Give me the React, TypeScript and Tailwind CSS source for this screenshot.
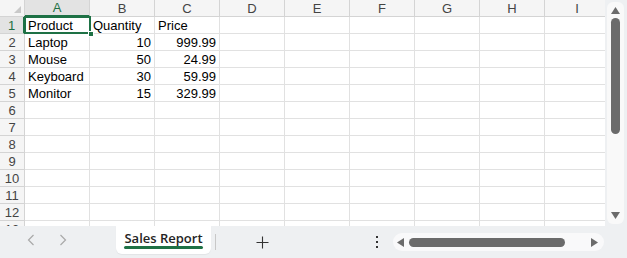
import React from 'react';

const cols = ['A', 'B', 'C', 'D', 'E', 'F', 'G', 'H', 'I'];

const data: Record<number, (string | null)[]> = {
  1: ['Product', 'Quantity', 'Price'],
  2: ['Laptop', '10', '999.99'],
  3: ['Mouse', '50', '24.99'],
  4: ['Keyboard', '30', '59.99'],
  5: ['Monitor', '15', '329.99'],
};

const rows = Array.from({ length: 13 }, (_, i) => i + 1);

export default function App() {
  return (
    <div className="w-[627px] h-[258px] flex flex-col bg-white overflow-hidden" style={{ fontFamily: '"Liberation Sans", Arial, sans-serif' }}>
      {/* Grid + vertical scrollbar */}
      <div className="flex h-[226px]">
        <div className="relative w-[605px] h-[226px] overflow-hidden">
          {/* Column headers */}
          <div className="flex h-[17px]">
            <div className="relative w-[25px] shrink-0 bg-[#f5f5f5] border-r border-b border-[#d4d4d4]">
              <svg className="absolute right-[3px] bottom-[3px]" width="7" height="7" viewBox="0 0 7 7">
                <polygon points="7,0 7,7 0,7" fill="#c9c9c9" />
              </svg>
            </div>
            {cols.map((c) => (
              <div
                key={c}
                className={`w-[65px] shrink-0 flex items-center justify-center text-[13px] leading-none border-r ${
                  c === 'A'
                    ? 'bg-[#e3e3e3] text-[#1e7145] border-b-2 border-b-[#1e7145] border-r-[#d4d4d4]'
                    : 'bg-[#f5f5f5] text-[#444] border-b border-[#d4d4d4]'
                } ${c === 'I' ? 'w-[60px]' : ''}`}
              >
                {c}
              </div>
            ))}
          </div>

          {/* Rows */}
          {rows.map((r) => (
            <div key={r} className="flex h-[17px]">
              <div
                className={`w-[25px] shrink-0 flex items-center justify-center text-[13px] leading-none border-b border-[#d4d4d4] ${
                  r === 1 ? 'bg-[#e3e3e3] text-[#1e7145] border-r-2 border-r-[#1e7145]' : 'bg-[#f5f5f5] text-[#444] border-r'
                }`}
              >
                {r}
              </div>
              {cols.map((c, ci) => {
                const v = data[r]?.[ci] ?? '';
                const num = r > 1 && ci > 0;
                return (
                  <div
                    key={c}
                    className={`w-[65px] shrink-0 flex items-center pt-px px-[3px] text-[13px] leading-none text-black border-r border-b border-[#e1e1e1] ${
                      num ? 'justify-end' : 'justify-start'
                    } ${c === 'I' ? 'w-[60px]' : ''}`}
                  >
                    {v}
                  </div>
                );
              })}
            </div>
          ))}

          {/* Selection on A1 */}
          <div className="absolute left-[24px] top-[16px] w-[67px] h-[18px] border-2 border-[#1e7145]" />
          <div className="absolute left-[88px] top-[31px] w-[6px] h-[6px] bg-[#1e7145] border border-white" />
        </div>

        {/* Vertical scrollbar */}
        <div className="w-[22px] h-[226px] bg-[#eef0f2] py-[2px] pl-[2px] pr-[3px]">
          <div className="h-full rounded-[6px] bg-[#f9f9f9] flex flex-col items-center">
            <svg className="mt-[5px]" width="9" height="7" viewBox="0 0 9 7">
              <polygon points="4.5,0 9,7 0,7" fill="#6b6b6b" />
            </svg>
            <div className="mt-[4px] w-[9px] h-[116px] rounded-full bg-[#6b6b6b]" />
            <div className="flex-1" />
            <svg className="mb-[5px]" width="9" height="7" viewBox="0 0 9 7">
              <polygon points="0,0 9,0 4.5,7" fill="#6b6b6b" />
            </svg>
          </div>
        </div>
      </div>

      {/* Sheet tabs bar */}
      <div className="flex-1 bg-[#eef0f2] flex items-start">
        <div className="flex items-center h-[28px] w-[116px]">
          <svg className="ml-[27px]" width="8" height="12" viewBox="0 0 8 12">
            <polyline points="6.5,1 1.5,6 6.5,11" fill="none" stroke="#a9a9a9" strokeWidth="1.2" />
          </svg>
          <svg className="ml-[24px]" width="8" height="12" viewBox="0 0 8 12">
            <polyline points="1.5,1 6.5,6 1.5,11" fill="none" stroke="#a9a9a9" strokeWidth="1.2" />
          </svg>
        </div>

        <div className="relative w-[95px] h-[28px] bg-white rounded-b-[6px] flex items-center justify-center shadow-[0_1px_1px_rgba(0,0,0,0.05)]">
          <span className="text-[13px] font-semibold text-[#242424] -mt-[3px]" style={{ fontFamily: '"Open Sans", "Noto Sans", sans-serif' }}>
            Sales Report
          </span>
          <div className="absolute left-[8px] right-[8px] bottom-[5px] h-[3px] rounded-full bg-[#1e7145]" />
        </div>

        <div className="w-px h-[16px] bg-[#c8c8c8] mt-[8px] ml-[4px]" />

        <div className="ml-[40px] h-[32px] flex items-center">
          <svg width="13" height="13" viewBox="0 0 13 13">
            <path d="M6.5 0.5v12M0.5 6.5h12" stroke="#333" strokeWidth="1.1" />
          </svg>
        </div>

        <div className="ml-[106px] h-[32px] flex items-center">
          <svg width="4" height="12" viewBox="0 0 4 12">
            <rect x="1" y="0" width="2" height="2" fill="#333" />
            <rect x="1" y="5" width="2" height="2" fill="#333" />
            <rect x="1" y="10" width="2" height="2" fill="#333" />
          </svg>
        </div>

        <div className="ml-[14px] mt-[7px] w-[211px] h-[18px] rounded-full bg-[#f9f9fa] flex items-center px-[4px]">
          <svg width="7" height="9" viewBox="0 0 7 9">
            <polygon points="0,4.5 7,0 7,9" fill="#6b6b6b" />
          </svg>
          <div className="ml-[5px] w-[156px] h-[9px] rounded-full bg-[#6b6b6b]" />
          <div className="flex-1" />
          <svg width="7" height="9" viewBox="0 0 7 9" className="mr-[2px]">
            <polygon points="7,4.5 0,0 0,9" fill="#6b6b6b" />
          </svg>
        </div>
      </div>
    </div>
  );
}
